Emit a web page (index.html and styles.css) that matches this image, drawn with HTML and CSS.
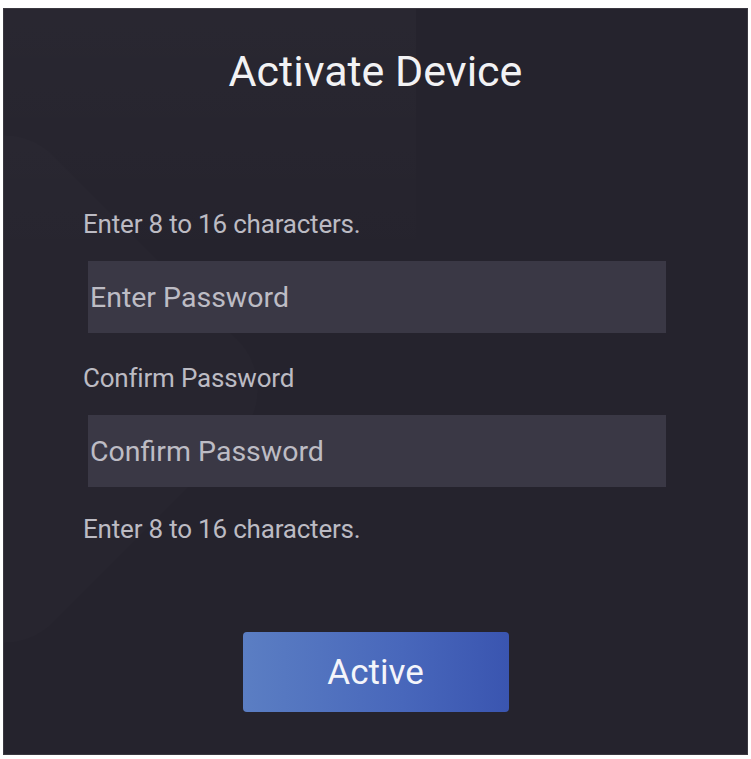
FILE: index.html
```html
<!DOCTYPE html>
<html lang="en">
<head>
  <meta charset="utf-8">
  <meta name="viewport" content="width=device-width, initial-scale=1">
  <title>Activate Device</title>
  <link rel="stylesheet" href="styles.css">
</head>
<body>
  <div class="screen">
    <div class="shade shade-top"></div>
    <div class="shade shade-hex"></div>

    <form class="activate" onsubmit="return false;">
      <h1>Activate Device</h1>

      <p class="hint hint-first">Enter 8 to 16 characters.</p>
      <input type="password" class="field" placeholder="Enter Password">

      <p class="hint hint-confirm">Confirm Password</p>
      <input type="password" class="field" placeholder="Confirm Password">

      <p class="hint hint-last">Enter 8 to 16 characters.</p>

      <button type="submit" class="btn-active">Active</button>
    </form>
  </div>
</body>
</html>
```

FILE: styles.css
```css
*, :after, :before { box-sizing: border-box; }
body {
  background: #fff;
  margin: 0;
  font-family: Roboto, "Open Sans", sans-serif;
}
.screen {
  position: relative;
  overflow: hidden;
  margin: 8px 3px 4px;
  height: 747px;
  background-color: #25232d;
  border: 1px solid #3a3840;
}

/* faint backdrop shapes */
.shade {
  position: absolute;
  pointer-events: none;
}
.shade-top {
  left: 0;
  top: 0;
  width: 412px;
  height: 260px;
  background: linear-gradient(180deg, rgba(255,255,255,.02), rgba(255,255,255,0));
}
.shade-hex {
  left: -200px;
  top: 180px;
  width: 400px;
  height: 400px;
  border-radius: 70px;
  transform: rotate(45deg);
  background: rgba(255,255,255,.013);
}

.activate {
  position: relative;
  display: flex;
  flex-direction: column;
  padding: 0 0 0 79px;
}
.activate h1 {
  margin: 37px 0 0 -79px;
  font-size: 43px;
  font-weight: 400;
  line-height: 50px;
  color: #f2f2f4;
  text-align: center;
}
.hint {
  margin: 0;
  font-size: 26px;
  letter-spacing: -.2px;
  line-height: 30px;
  color: #bcbbc3;
}
.hint-first { margin-top: 113px; }
.hint-confirm { margin-top: 30px; }
.hint-last { margin-top: 27px; }

.field {
  margin: 22px 0 0 5px;
  width: 578px;
  height: 72px;
  padding: 0 0 0 2px;
  border: 0;
  outline: none;
  background: #3a3845;
  color: #d0d0d6;
  font-family: inherit;
  font-size: 28.5px;
}
.field::placeholder {
  color: #bdbcc4;
}

.btn-active {
  align-self: center;
  margin: 88px 0 0 -79px;
  width: 266px;
  height: 80px;
  border: 0;
  border-radius: 4px;
  background: linear-gradient(90deg, #5b7ec3, #4867bb 60%, #3a55b0);
  color: #f4f5fa;
  font-family: inherit;
  font-size: 35px;
  cursor: pointer;
}
```
